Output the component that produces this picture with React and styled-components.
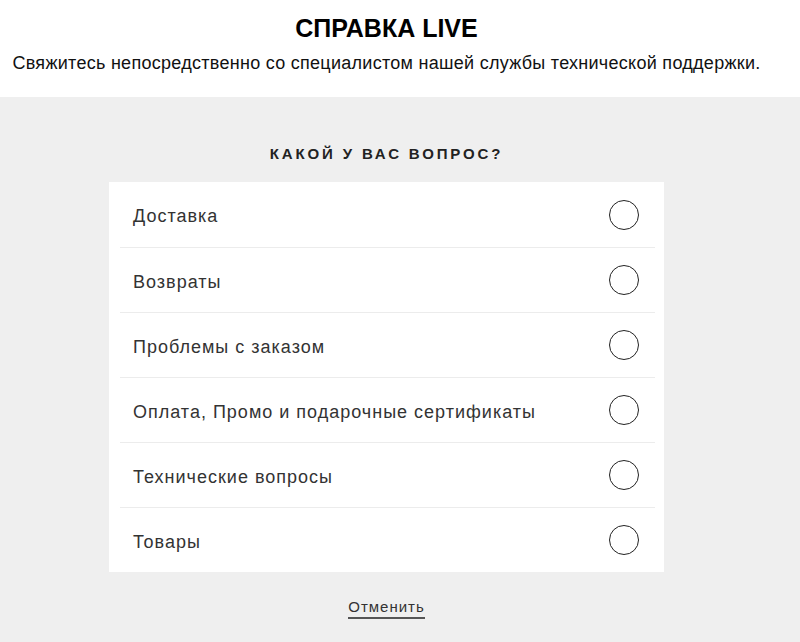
import React from "react";
import styled, { createGlobalStyle } from "styled-components";

const Global = createGlobalStyle`
  html, body { margin: 0; padding: 0; background: #efefef; }
  body { font-family: "Liberation Sans", Arial, sans-serif; color: #222; }
`;

const Page = styled.div`
  width: 800px;
  min-height: 642px;
  background: #efefef;
`;

const Header = styled.header`
  background: #fff;
  height: 97px;
  display: flex;
  flex-direction: column;
  align-items: center;
  padding: 11px 27px 0 0;
  box-sizing: border-box;
`;

const Title = styled.h1`
  margin: 0;
  font-size: 25px;
  line-height: 34px;
  font-weight: 700;
  color: #000;
`;

const Subtitle = styled.p`
  margin: 7px 0 0;
  font-size: 18px;
  line-height: 22px;
  color: #111;
  letter-spacing: 0.28px;
  white-space: nowrap;
`;

const Body = styled.main`
  display: flex;
  flex-direction: column;
  align-items: center;
  padding: 47px 27px 0 0;
`;

const Question = styled.h2`
  margin: 0;
  font-size: 15px;
  line-height: 20px;
  font-weight: 700;
  letter-spacing: 2.85px;
  color: #222;
`;

const Card = styled.ul`
  list-style: none;
  margin: 18px 0 0;
  padding: 0 9px 0 11px;
  width: 555px;
  box-sizing: border-box;
  background: #fff;
`;

const Row = styled.li`
  display: flex;
  align-items: center;
  justify-content: space-between;
  height: 65px;
  padding: 0 16px 0 13px;
  border-top: ${(p) => (p.$first ? "none" : "1px solid #ececec")};
  box-sizing: border-box;
  cursor: pointer;
`;

const Label = styled.span`
  font-size: 18px;
  letter-spacing: 1px;
  color: #333;
  padding-top: 4px;
`;

const Radio = styled.span`
  width: 30px;
  height: 30px;
  border: 1.5px solid #222;
  border-radius: 50%;
  box-sizing: border-box;
`;

const Cancel = styled.a`
  margin-top: 26px;
  font-size: 15px;
  letter-spacing: 1px;
  color: #333;
  text-decoration: none;
  border-bottom: 2px solid #555;
  padding-bottom: 1px;
  line-height: 18px;
`;

const items = [
  "Доставка",
  "Возвраты",
  "Проблемы с заказом",
  "Оплата, Промо и подарочные сертификаты",
  "Технические вопросы",
  "Товары",
];

export default function App() {
  return (
    <Page>
      <Global />
      <Header>
        <Title>СПРАВКА LIVE</Title>
        <Subtitle>
          Свяжитесь непосредственно со специалистом нашей службы технической поддержки.
        </Subtitle>
      </Header>
      <Body>
        <Question>КАКОЙ У ВАС ВОПРОС?</Question>
        <Card>
          {items.map((t, i) => (
            <Row key={t} $first={i === 0}>
              <Label>{t}</Label>
              <Radio />
            </Row>
          ))}
        </Card>
        <Cancel href="#">Отменить</Cancel>
      </Body>
    </Page>
  );
}
